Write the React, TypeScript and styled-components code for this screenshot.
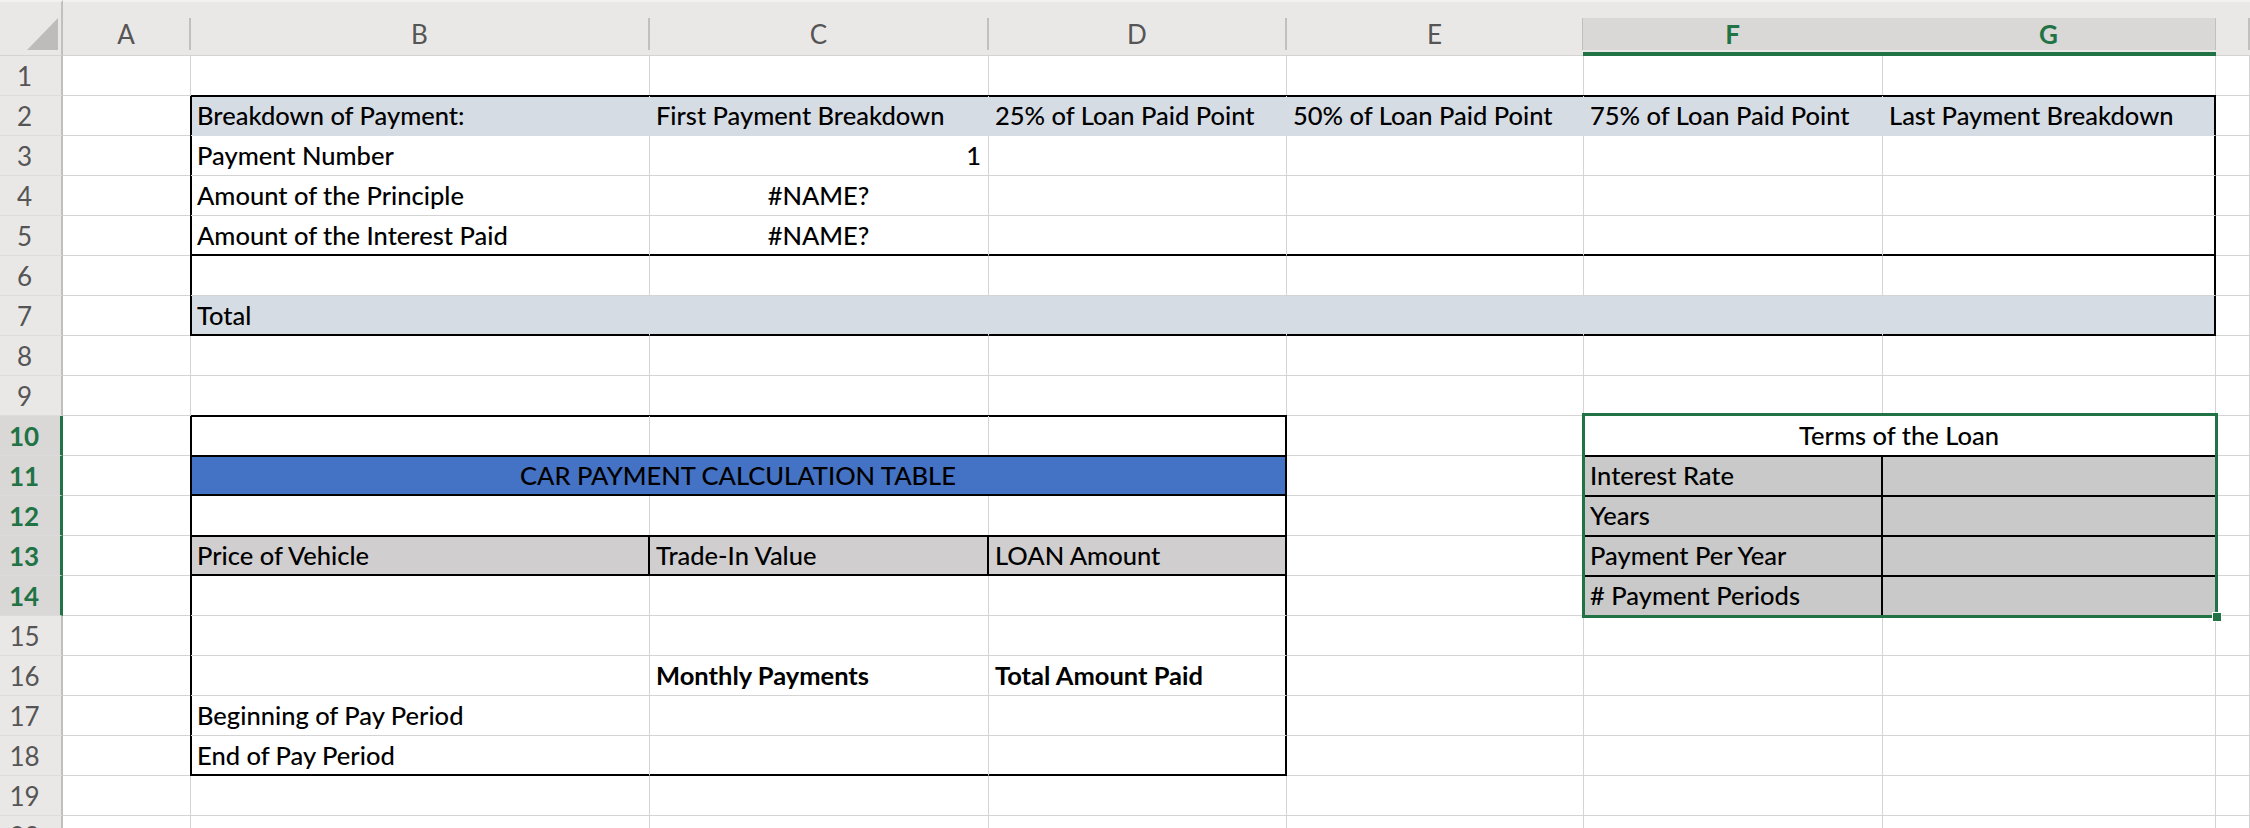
import React from 'react'
import styled, { createGlobalStyle, css } from 'styled-components'

const GRID = '#d4d4d4'
const GREEN = '#217346'
const HEAD_BG = '#eae8e6'
const HEAD_ACTIVE = '#d9d8d6'
const HEAD_LINE = '#c2c0be'
const SLATE = '#d6dce4'
const BLUE = '#4472c4'
const WARM_GRAY = '#d0cece'
const TERMS_GRAY = '#c9c9c9'

const COLUMNS = ['A', 'B', 'C', 'D', 'E', 'F', 'G', '']
const ACTIVE_COLS = ['F', 'G']
const ACTIVE_ROWS = [10, 11, 12, 13, 14]

type Align = 'left' | 'center' | 'right'

interface CellDef {
  text?: string
  span?: number
  fill?: string
  align?: Align
  bold?: boolean
  edges?: string
}

// one entry per sheet row, columns A..H (a span eats the following columns)
const ROWS: Record<number, CellDef[]> = {
  2: [
    {},
    { text: 'Breakdown of Payment:', fill: SLATE, edges: 'tl' },
    { text: 'First Payment Breakdown', fill: SLATE, edges: 't' },
    { text: '25% of Loan Paid Point', fill: SLATE, edges: 't' },
    { text: '50% of Loan Paid Point', fill: SLATE, edges: 't' },
    { text: '75% of Loan Paid Point', fill: SLATE, edges: 't' },
    { text: 'Last Payment Breakdown', fill: SLATE, edges: 'tr' },
    {},
  ],
  3: [{}, { text: 'Payment Number', edges: 'l' }, { text: '1', align: 'right' }, {}, {}, {}, { edges: 'r' }, {}],
  4: [{}, { text: 'Amount of the Principle', edges: 'l' }, { text: '#NAME?', align: 'center' }, {}, {}, {}, { edges: 'r' }, {}],
  5: [
    {},
    { text: 'Amount of the Interest Paid', edges: 'lb' },
    { text: '#NAME?', align: 'center', edges: 'b' },
    { edges: 'b' },
    { edges: 'b' },
    { edges: 'b' },
    { edges: 'rb' },
    {},
  ],
  6: [{}, { edges: 'l' }, {}, {}, {}, {}, { edges: 'r' }, {}],
  7: [
    {},
    { text: 'Total', fill: SLATE, edges: 'lb' },
    { fill: SLATE, edges: 'b' },
    { fill: SLATE, edges: 'b' },
    { fill: SLATE, edges: 'b' },
    { fill: SLATE, edges: 'b' },
    { fill: SLATE, edges: 'rb' },
    {},
  ],
  10: [{}, { edges: 'tl' }, { edges: 't' }, { edges: 'tr' }, {}, { text: 'Terms of the Loan', span: 2, align: 'center' }, {}],
  11: [
    {},
    { text: 'CAR PAYMENT CALCULATION TABLE', span: 3, fill: BLUE, align: 'center', edges: 'tblr' },
    {},
    { text: 'Interest Rate', fill: TERMS_GRAY, edges: 'tr' },
    { fill: TERMS_GRAY, edges: 't' },
    {},
  ],
  12: [{}, { edges: 'l' }, {}, { edges: 'r' }, {}, { text: 'Years', fill: TERMS_GRAY, edges: 'tr' }, { fill: TERMS_GRAY, edges: 't' }, {}],
  13: [
    {},
    { text: 'Price of Vehicle', fill: WARM_GRAY, edges: 'tlbr' },
    { text: 'Trade-In Value', fill: WARM_GRAY, edges: 'tbr' },
    { text: 'LOAN Amount', fill: WARM_GRAY, edges: 'tbr' },
    {},
    { text: 'Payment Per Year', fill: TERMS_GRAY, edges: 'tr' },
    { fill: TERMS_GRAY, edges: 't' },
    {},
  ],
  14: [{}, { edges: 'l' }, {}, { edges: 'r' }, {}, { text: '# Payment Periods', fill: TERMS_GRAY, edges: 'tr' }, { fill: TERMS_GRAY, edges: 't' }, {}],
  15: [{}, { edges: 'l' }, {}, { edges: 'r' }, {}, {}, {}, {}],
  16: [{}, { edges: 'l' }, { text: 'Monthly Payments', bold: true }, { text: 'Total Amount Paid', bold: true, edges: 'r' }, {}, {}, {}, {}],
  17: [{}, { text: 'Beginning of Pay Period', edges: 'l' }, {}, { edges: 'r' }, {}, {}, {}, {}],
  18: [{}, { text: 'End of Pay Period', edges: 'lb' }, { edges: 'b' }, { edges: 'rb' }, {}, {}, {}, {}],
}

const emptyRow = (): CellDef[] => COLUMNS.map(() => ({}))

const GlobalStyle = createGlobalStyle`
  html, body {
    margin: 0;
    padding: 0;
    background: #fff;
    overflow: hidden;
  }
  body {
    font-family: Lato, "Open Sans", sans-serif;
  }
`

const Sheet = styled.div`
  position: relative;
  display: grid;
  grid-template-columns: 63px 128px 459px 339px 298px 297px 299px 333px 1fr;
  grid-template-rows: 56px repeat(20, 40px);
  width: 2250px;
  height: 828px;
  overflow: hidden;
`

const Row = styled.div`
  display: contents;
`

const Corner = styled.div`
  background: ${HEAD_BG};
  border-top: 2px solid #f2f1f0;
  border-right: 2px solid ${HEAD_LINE};
  border-bottom: 1px solid ${GRID};
  padding: 16px 0 0 27px;
`

const ColHeader = styled.div<{ $active: boolean }>`
  display: flex;
  align-items: flex-end;
  background: ${HEAD_BG};
  border-top: 2px solid #f2f1f0;
  padding: 16px 0 ${(p) => (p.$active ? 2 : 5)}px;
  border-bottom: ${(p) => (p.$active ? `4px solid ${GREEN}` : `1px solid ${GRID}`)};
  ${(p) =>
    p.$active &&
    css`
      margin: 0 -1px;
    `}
`

const ColLabel = styled.div<{ $active: boolean }>`
  flex: 1;
  height: 32px;
  display: flex;
  align-items: center;
  justify-content: center;
  border-right: 2px solid ${HEAD_LINE};
  background: ${(p) => (p.$active ? HEAD_ACTIVE : 'transparent')};
  color: ${(p) => (p.$active ? GREEN : '#555')};
  font-weight: ${(p) => (p.$active ? 700 : 400)};
  font-size: 26px;
`

const RowHeader = styled.div<{ $active: boolean }>`
  display: flex;
  align-items: center;
  justify-content: center;
  padding-right: 12px;
  background: ${(p) => (p.$active ? HEAD_ACTIVE : HEAD_BG)};
  border-bottom: 1px solid #dcdcdc;
  border-right: ${(p) => (p.$active ? `3px solid ${GREEN}` : `2px solid ${HEAD_LINE}`)};
  color: ${(p) => (p.$active ? GREEN : '#555')};
  font-weight: ${(p) => (p.$active ? 700 : 400)};
  font-size: 26px;
`

const JUSTIFY: Record<Align, string> = {
  left: 'flex-start',
  center: 'center',
  right: 'flex-end',
}

const edgeShadow = (edges: string) => {
  const parts: string[] = []
  if (edges.includes('t')) parts.push('0 -1px 0 #000', 'inset 0 1px 0 #000')
  if (edges.includes('l')) parts.push('-1px 0 0 #000', 'inset 1px 0 0 #000')
  if (edges.includes('b')) parts.push('inset 0 -1px 0 #000')
  if (edges.includes('r')) parts.push('inset -1px 0 0 #000')
  return parts.length ? parts.join(', ') : 'none'
}

const Cell = styled.div<{ $fill?: string; $align: Align; $bold?: boolean; $edges: string; $span: number }>`
  grid-column: span ${(p) => p.$span};
  display: flex;
  align-items: flex-end;
  justify-content: ${(p) => JUSTIFY[p.$align]};
  min-width: 0;
  padding: 0 7px 7px 6px;
  background: ${(p) => p.$fill ?? '#fff'};
  border-right: 1px solid ${(p) => (p.$edges.includes('r') ? '#000' : p.$fill ?? GRID)};
  border-bottom: 1px solid ${(p) => (p.$edges.includes('b') ? '#000' : p.$fill ?? GRID)};
  box-shadow: ${(p) => edgeShadow(p.$edges)};
  color: #000;
  font-size: 25.5px;
  line-height: 26px;
  font-weight: ${(p) => (p.$bold ? 700 : 500)};
  white-space: nowrap;
`

const Selection = styled.div`
  position: absolute;
  grid-column: 7 / 9;
  grid-row: 11 / 16;
  inset: -3px -2px -2px -2px;
  border: 3px solid ${GREEN};
  pointer-events: none;
  z-index: 2;
`

const FillHandle = styled.div`
  position: absolute;
  right: -7px;
  bottom: -7px;
  width: 8px;
  height: 8px;
  background: ${GREEN};
  border: 1px solid #fff;
`

const SelectAll = () => (
  <svg width='31' height='32' viewBox='0 0 31 32'>
    <polygon points='31,0 31,32 0,32' fill='#bdbcbb' />
  </svg>
)

export default function App() {
  const rows = Array.from({ length: 20 }, (_, i) => i + 1)
  return (
    <>
      <GlobalStyle />
      <Sheet>
        <Row>
          <Corner>
            <SelectAll />
          </Corner>
          {COLUMNS.map((col, i) => {
            const active = ACTIVE_COLS.includes(col)
            return (
              <ColHeader key={i} $active={active}>
                <ColLabel $active={active}>{col}</ColLabel>
              </ColHeader>
            )
          })}
        </Row>
        {rows.map((r) => {
          const active = ACTIVE_ROWS.includes(r)
          const cells = ROWS[r] ?? emptyRow()
          return (
            <Row key={r}>
              <RowHeader $active={active}>{r}</RowHeader>
              {cells.map((c, i) => (
                <Cell
                  key={i}
                  $fill={c.fill}
                  $align={c.align ?? 'left'}
                  $bold={c.bold}
                  $edges={c.edges ?? ''}
                  $span={c.span ?? 1}
                >
                  {c.text}
                </Cell>
              ))}
            </Row>
          )
        })}
        <Selection>
          <FillHandle />
        </Selection>
      </Sheet>
    </>
  )
}
